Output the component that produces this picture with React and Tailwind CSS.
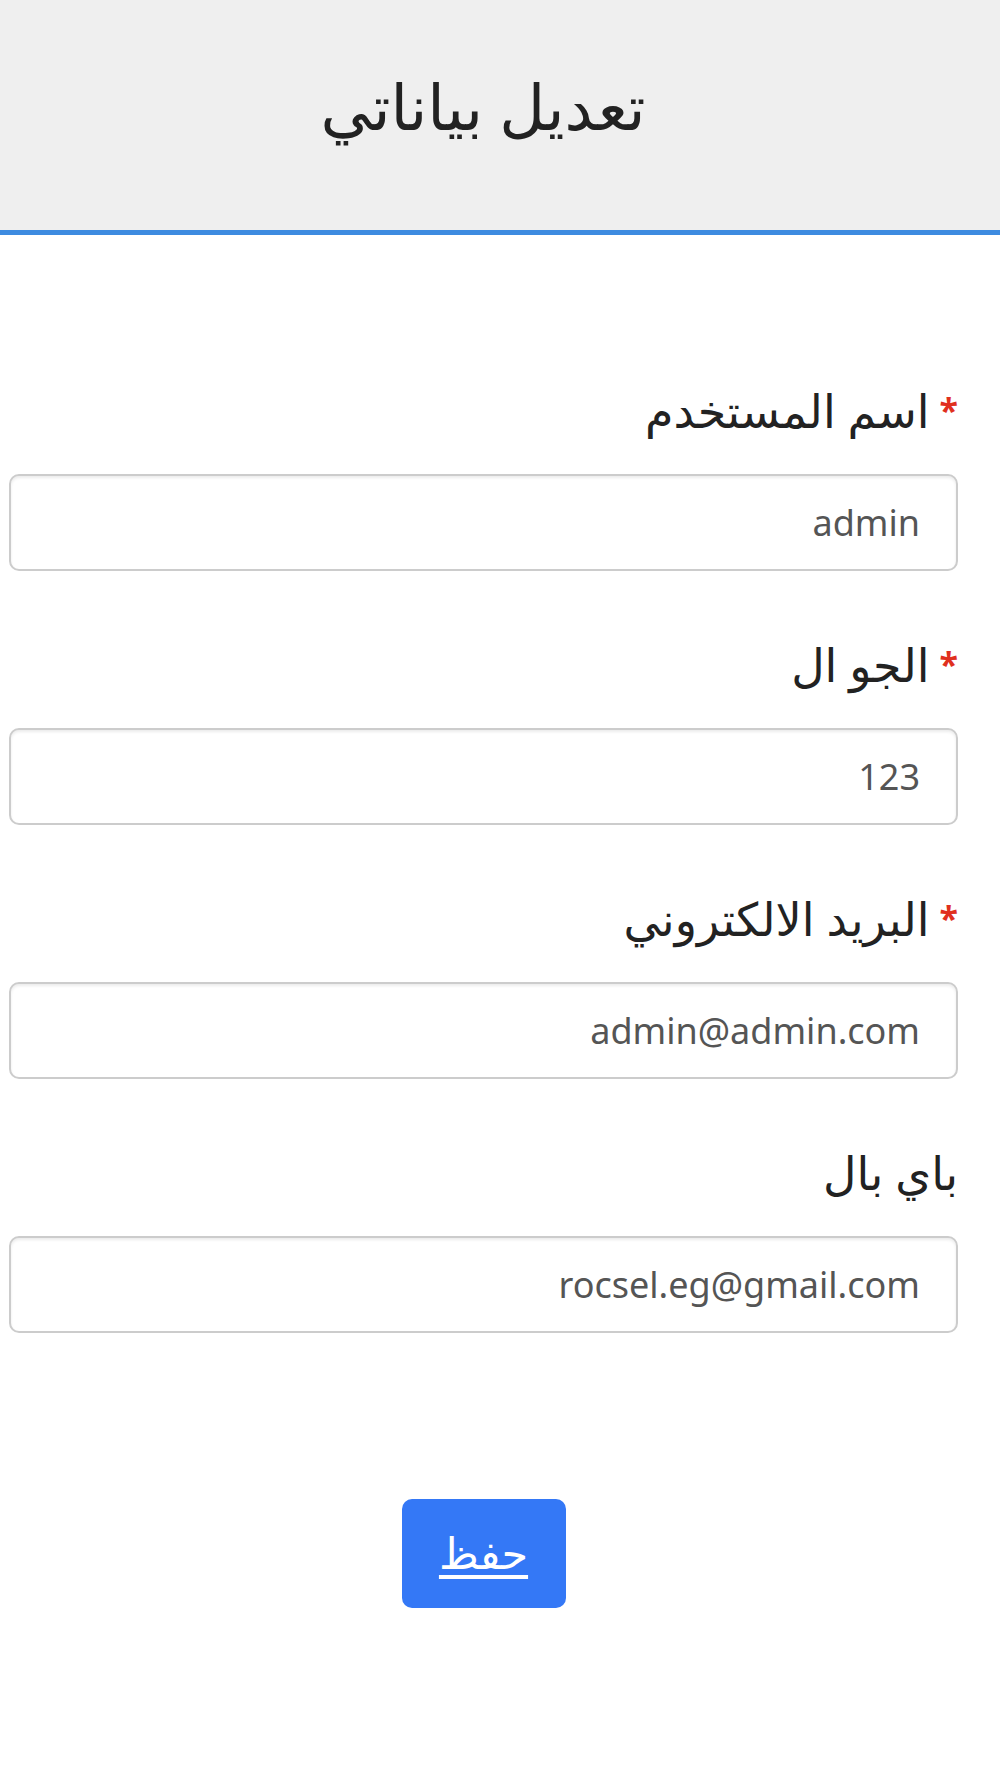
import React from 'react';

const fields = [
  { label: 'اسم المستخدم', value: 'admin', required: true },
  { label: 'الجو ال', value: '123', required: true },
  { label: 'البريد الالكتروني', value: 'admin@admin.com', required: true },
  { label: 'باي بال', value: 'rocsel.eg@gmail.com', required: false },
];

const App = () => {
  return (
    <div dir="rtl" className="min-h-[1778px] bg-white" style={{ fontFamily: '"Noto Sans", "DejaVu Sans", sans-serif' }}>
      {/* Header */}
      <div className="h-[235px] bg-[#efefef] border-b-[5px] border-[#3d8be0] flex items-center justify-center pr-[34px]">
        <h1 className="text-[63px] text-[#222] leading-none mb-[20px]">تعديل بياناتي</h1>
      </div>

      {/* Form */}
      <form className="pr-[42px] pl-[9px] pt-[148px]">
        {fields.map((f) => (
          <div key={f.label} className="mb-[66px]">
            <label className="flex items-center gap-[10px] h-[54px] mb-[37px] text-[46px] leading-none text-[#222]">
              {f.required && <span className="text-[#e0301e] text-[34px] font-bold">*</span>}
              <span>{f.label}</span>
            </label>
            <input
              type="text"
              defaultValue={f.value}
              className="w-full h-[97px] rounded-[10px] border-2 border-[#ccc] shadow-[inset_0_2px_3px_rgba(0,0,0,0.08)] px-[36px] text-[36px] text-[#555] bg-white outline-none"
            />
          </div>
        ))}

        <div className="flex justify-center pt-[100px]">
          <button type="button" className="w-[164px] h-[109px] rounded-[10px] bg-[#3478f6] text-white text-[43px] underline underline-offset-[6px]">
            حفظ
          </button>
        </div>
      </form>
    </div>
  );
};

export default App;
